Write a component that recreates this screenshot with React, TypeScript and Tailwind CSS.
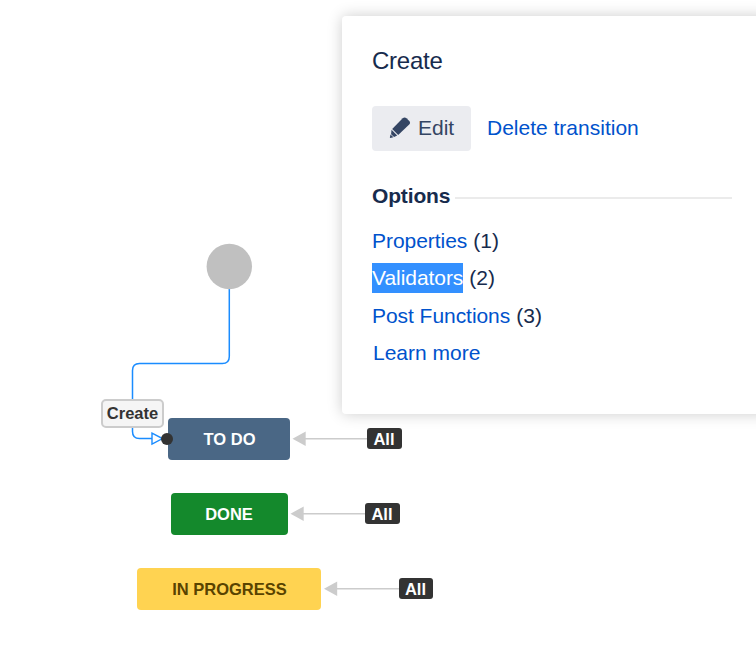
const statuses = [
  {
    name: "TO DO",
    box: "left-[168px] top-[418px] w-[122px] bg-[#4a6785] pl-px text-white",
    all: "left-[367px] top-[428px] w-[35px]",
    arrow: { x: 293, y: 438.75, end: 368 },
  },
  {
    name: "DONE",
    box: "left-[171px] top-[493px] w-[117px] bg-[#14892c] pr-px pt-px text-white",
    all: "left-[365px] top-[503px] w-[35px]",
    arrow: { x: 291, y: 513.75, end: 366 },
  },
  {
    name: "IN PROGRESS",
    box: "left-[137px] top-[568px] w-[184px] bg-[#ffd351] pl-px pt-px text-[#594300]",
    all: "left-[399px] top-[578px] w-[34px]",
    arrow: { x: 324.5, y: 588.75, end: 400 },
  },
];

const options = [
  { label: "Properties", count: 1 },
  { label: "Validators", count: 2, selected: true },
  { label: "Post Functions", count: 3 },
];

function PencilIcon() {
  return (
    <svg className="mt-px" width="22" height="22" viewBox="0 0 22 22" fill="#344563">
      <path d="M13.7 1.3Q15.6 -.3 17.5 1.3L20.3 4Q21.8 5.7 20.2 7.4L9.2 17.9L3.2 11.9Z" />
      <path d="M2.5 12.8L8.2 18.6L5.1 20L2.1 17.2Z" />
      <path d="M1.5 17.5L4.4 20.2L1.4 21Q.8 21 .9 20.3Z" />
    </svg>
  );
}

function Edges() {
  return (
    <svg className="absolute inset-0" width="756" height="653" fill="none">
      <path
        d="M229.3 288V356.5Q229.3 363.6 222.3 363.6H139.5Q132.5 363.6 132.5 370.6V431.5Q132.5 438.6 139.5 438.6H152"
        stroke="#1a8cff"
        strokeWidth="1.5"
      />
      <path d="M152 433.2L162.5 438.6L152 444Z" fill="#fff" stroke="#1a8cff" strokeWidth="1.4" />
      <circle cx="229.3" cy="266.5" r="22.7" fill="#c0c0c0" />
      {statuses.map(({ name, arrow }) => (
        <g key={name}>
          <path d={`M${arrow.x + 12} ${arrow.y}H${arrow.end}`} stroke="#ccc" strokeWidth="1.5" />
          <path
            d={`M${arrow.x - 0.5} ${arrow.y}L${arrow.x + 12.7} ${arrow.y - 7.3}V${arrow.y + 7.3}Z`}
            fill="#ccc"
          />
        </g>
      ))}
    </svg>
  );
}

export default function App() {
  return (
    <div className="relative h-[653px] w-[756px] overflow-hidden bg-white font-['Liberation_Sans',Arial,sans-serif]">
      <Edges />

      {statuses.map((status) => (
        <div key={status.name} className="text-[16.5px] font-bold">
          <div className={`absolute flex h-[42px] items-center justify-center rounded-[4px] ${status.box}`}>
            {status.name}
          </div>
          <div
            className={`absolute flex h-[21px] items-center justify-center rounded-[3px] bg-[#333] pr-px pt-[2px] text-white ${status.all}`}
          >
            All
          </div>
        </div>
      ))}

      <div className="absolute left-[101px] top-[399px] flex h-[29px] w-[63px] items-center justify-center rounded-[5px] border-2 border-[#ccc] bg-[#f5f5f5] text-[16.5px] font-bold text-[#333]">
        Create
      </div>
      <div className="absolute left-[161px] top-[432.5px] size-[12px] rounded-full bg-[#333]" />

      <aside className="absolute left-[342px] top-4 h-[398px] w-[430px] rounded-[4px] bg-white pl-[30px] pr-10 pt-[30px] text-[21px] text-[#172b4d] shadow-[0_0_15px_rgba(0,0,0,0.2)]">
        <h2 className="text-[24px] leading-[30px] tracking-[-0.24px]">Create</h2>

        <div className="mt-[30px] flex items-center gap-4">
          <button className="flex h-[45px] w-[99px] items-center gap-[7px] rounded-[4px] bg-[#ebecf0] pb-[2px] pl-[17px] text-[#344563]">
            <PencilIcon />
            Edit
          </button>
          <a className="pb-[2px] text-[#0052cc]">Delete transition</a>
        </div>

        <div className="mt-[30px] flex items-center gap-[5px]">
          <h3 className="font-bold leading-[30px] tracking-[-0.15px]">Options</h3>
          <div className="mt-[3px] h-[2px] flex-1 bg-[#ebebeb]" />
        </div>

        <ul className="mt-[15px] flex flex-col leading-[30px]">
          {options.map((option) => (
            <li key={option.label} className="flex gap-[6px] pb-[7px] even:pb-2">
              <a
                className={
                  option.selected ? "bg-[#3390ff] tracking-[-0.05px] text-white" : "tracking-[-0.05px] text-[#0052cc]"
                }
              >
                {option.label}
              </a>
              <span>({option.count})</span>
            </li>
          ))}
          <li className="pl-px text-[#0052cc]">Learn more</li>
        </ul>
      </aside>
    </div>
  );
}
